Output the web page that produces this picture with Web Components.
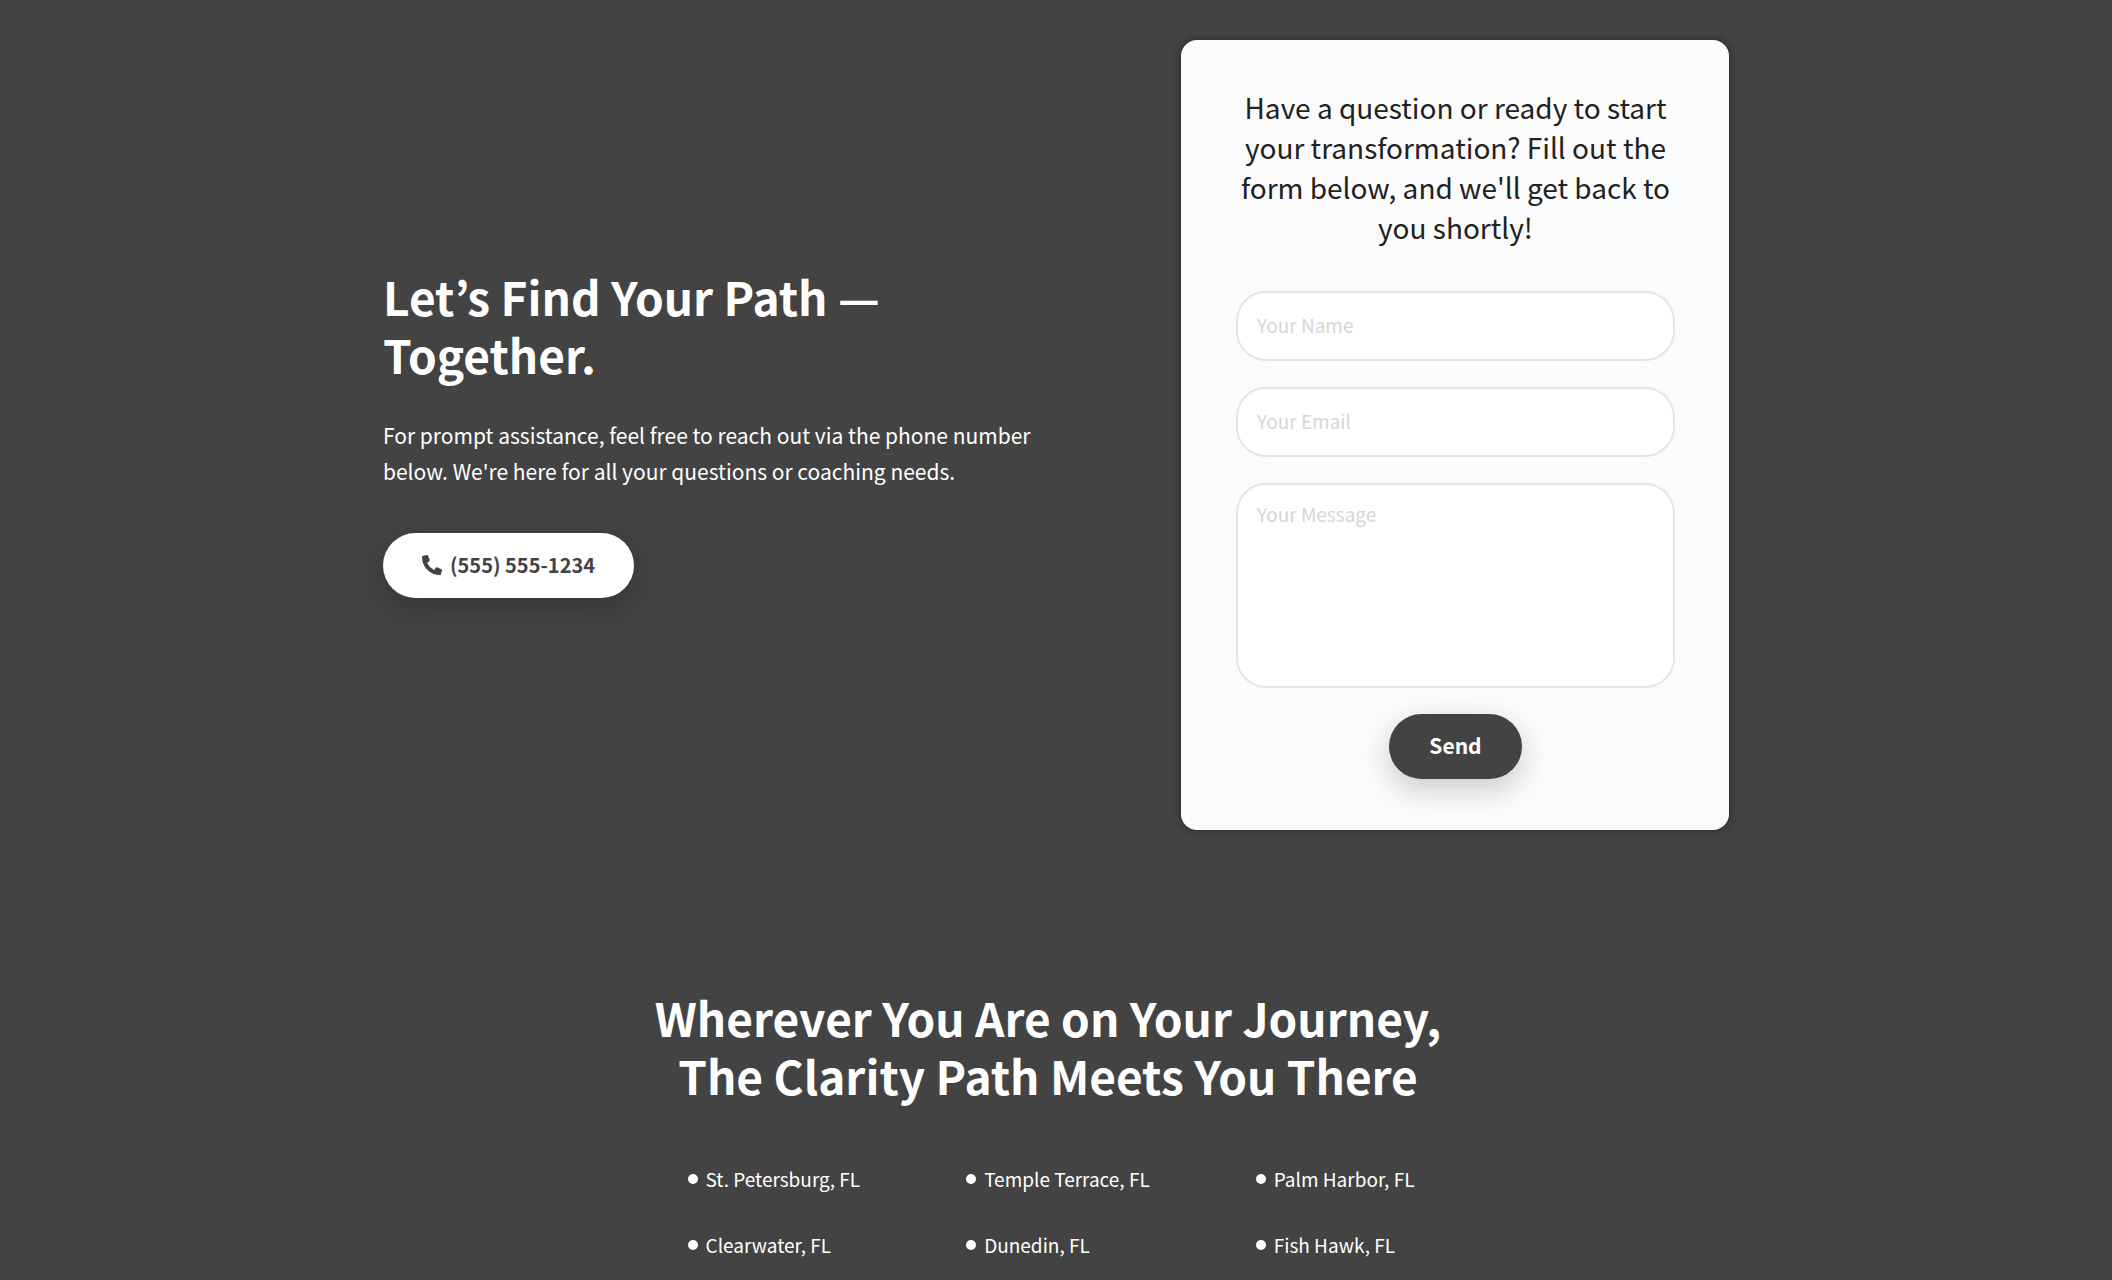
<!DOCTYPE html>
<html lang="en">
<head>
<meta charset="utf-8">
<meta name="viewport" content="width=device-width, initial-scale=1">
<title>The Clarity Path</title>
<style>
html { background: #434343; }
body { margin: 0; font-family: "Noto Sans CJK JP", "Noto Sans", sans-serif; color: #fff; }
</style>
</head>
<body>
<contact-page></contact-page>
<script>
const define = (name, html) => {
  const template = document.createElement("template");
  template.innerHTML = html;
  customElements.define(name, class extends HTMLElement {
    constructor() {
      super();
      this.attachShadow({ mode: "open" }).append(template.content.cloneNode(true));
    }
  });
};

define("phone-icon", `
<style>:host { display: block; width: 20px; height: 20px; } svg { display: block; width: 100%; height: 100%; fill: currentColor; }</style>
<svg viewBox="0 0 512 512" aria-hidden="true"><path d="M497.39 361.8l-112-48a24 24 0 0 0-28 6.9l-49.6 60.6A370.66 370.66 0 0 1 130.6 204.11l60.6-49.6a23.94 23.94 0 0 0 6.9-28l-48-112A24.16 24.16 0 0 0 122.6.61l-104 24A24 24 0 0 0 0 48c0 256.5 207.9 464 464 464a24 24 0 0 0 23.4-18.6l24-104a24.29 24.29 0 0 0-14.01-27.6z"/></svg>`);

define("contact-intro", `
<style>
:host { display: block; padding-bottom: 5px; }
h1 { margin: 0 0 34px; font-size: 46px; line-height: 58px; font-weight: 700; }
p { margin: 0 0 44px; font-size: 21px; line-height: 36px; }
a { display: inline-flex; align-items: center; gap: 8px; height: 65px; padding: 0 39px 2px; box-sizing: border-box;
  border-radius: 33px; background: #fff; color: #434343; font-size: 20px; line-height: 30px; font-weight: 700; text-decoration: none;
  box-shadow: 0 10px 30px rgba(0,0,0,.2); }
</style>
<h1>Let’s Find Your Path — Together.</h1>
<p>For prompt assistance, feel free to reach out via the phone number below. We're here for all your questions or coaching needs.</p>
<a href="tel:5555551234"><phone-icon></phone-icon><span>(555) 555-1234</span></a>`);

define("contact-form", `
<style>
:host { display: block; box-sizing: border-box; padding: 47px 54px 51px 55px; border-radius: 16px; background: #fbfbfb; color: #212121;
  box-shadow: 0 0 10px rgba(0,0,0,.4); }
h2 { margin: 0 0 44px; font-size: 28px; line-height: 40px; font-weight: 400; text-align: center; }
form { display: flex; flex-direction: column; align-items: center; gap: 26px; }
input, textarea { display: block; width: 100%; box-sizing: border-box; margin: 0; border: 2px solid #e5e5e5; border-radius: 30px;
  background: #fff; color: #212121; font-family: inherit; font-size: 19px; line-height: 26px; padding: 0 19px 3px; outline: none; }
input { height: 70px; }
textarea { height: 205px; padding: 16px 19px; resize: none; }
::placeholder { color: #d6d6d6; opacity: 1; }
button { height: 65px; padding: 0 40px 3px; border: 0; border-radius: 33px; background: #434343; color: #fff;
  font-family: inherit; font-size: 21px; line-height: 30px; font-weight: 700; box-shadow: 0 10px 30px rgba(0,0,0,.2); }
</style>
<h2>Have a question or ready to start your transformation? Fill out the form below, and we'll get back to you shortly!</h2>
<form>
<input type="text" aria-label="Your Name" placeholder="Your Name">
<input type="email" aria-label="Your Email" placeholder="Your Email">
<textarea aria-label="Your Message" placeholder="Your Message"></textarea>
<button type="button">Send</button>
</form>`);

define("area-item", `
<style>
:host { display: flex; align-items: center; gap: 8px; font-size: 19px; line-height: 30px; white-space: nowrap; }
:host::before { content: ""; width: 10px; height: 10px; border-radius: 50%; background: #fff; }
</style>
<slot></slot>`);

define("service-areas", `
<style>
:host { display: flex; flex-direction: column; align-items: center; box-sizing: border-box; padding-right: 16px; }
h2 { margin: 0 0 60px; max-width: 840px; font-size: 46px; line-height: 58px; font-weight: 700; text-align: center; }
div { display: grid; grid-template-columns: repeat(3, auto); gap: 36px 106px; padding-left: 6px; }
</style>
<h2>Wherever You Are on Your Journey, The Clarity Path Meets You There</h2>
<div role="list">
<area-item role="listitem">St. Petersburg, FL</area-item><area-item role="listitem">Temple Terrace, FL</area-item><area-item role="listitem">Palm Harbor, FL</area-item>
<area-item role="listitem">Clearwater, FL</area-item><area-item role="listitem">Dunedin, FL</area-item><area-item role="listitem">Fish Hawk, FL</area-item>
</div>`);

define("contact-page", `
<style>
:host { display: block; padding: 40px 24px 16px; }
main { max-width: 1346px; margin: 0 auto; }
section { display: flex; align-items: center; justify-content: space-between; gap: 60px; margin-bottom: 158px; }
contact-intro { flex: 0 1 690px; }
contact-form { flex: 0 0 548px; }
</style>
<main>
<section><contact-intro></contact-intro><contact-form></contact-form></section>
<service-areas></service-areas>
</main>`);
</script>
</body>
</html>
